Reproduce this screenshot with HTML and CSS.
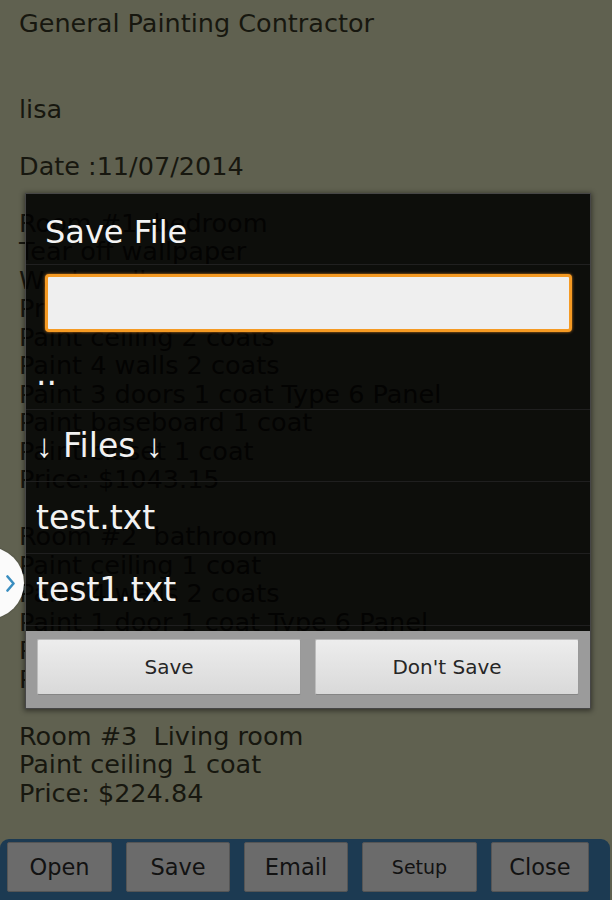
FILE: index.html
```html
<!DOCTYPE html>
<html lang="en">
<head>
  <meta charset="UTF-8" />
  <meta name="viewport" content="width=device-width, initial-scale=1" />
  <title>Estimate - Save File</title>
  <link rel="stylesheet" href="styles.css">
</head>
<body>

<div id="screen">
  <div id="doc">
<p id="docText">General Painting Contractor


lisa

Date :11/07/2014

Room #1  bedroom
Tear off wallpaper
Wash walls
Prime 4 walls 1 coat
Paint ceiling 2 coats
Paint 4 walls 2 coats
Paint 3 doors 1 coat Type 6 Panel
Paint baseboard 1 coat
Paint closet 1 coat
Price: $1043.15

Room #2  bathroom
Paint ceiling 1 coat
Paint 4 walls 2 coats
Paint 1 door 1 coat Type 6 Panel
Paint baseboard 1 coat
Price: $486.20

Room #3  Living room
Paint ceiling 1 coat
Price: $224.84</p>
  </div>

  <div id="toolbar">
    <button class="tool">Open</button>
    <button class="tool">Save</button>
    <button class="tool">Email</button>
    <button class="tool small">Setup</button>
    <button class="tool">Close</button>
  </div>

  <!-- save dialog, sits over the estimate -->
  <div id="dialog">
    <div class="dialog-title">Save File</div>
    <input class="file-name" type="text" value="" />
    <div class="file-list">
      <div class="file-row"><span>..</span></div>
      <div class="file-row"><span><span class="arrow">↓</span> Files <span class="arrow">↓</span></span></div>
      <div class="file-row"><span>test.txt</span></div>
      <div class="file-row"><span>test1.txt</span></div>
    </div>
    <div class="dialog-buttons">
      <button class="dlg-btn">Save</button>
      <button class="dlg-btn">Don't Save</button>
    </div>
  </div>

  <div id="handle">
    <svg width="9" height="17" viewBox="0 0 9 17">
      <polyline points="1.5,1.5 7.5,8.5 1.5,15.5" fill="none" stroke="#3a8ec0" stroke-width="2.6" stroke-linecap="round" stroke-linejoin="round" />
    </svg>
  </div>
</div>

</body>
</html>
```

FILE: styles.css
```css
body {
  margin: 0;
  background-color: #606150;
  font-family: "DejaVu Sans", sans-serif;
}
#screen {
  position: relative;
  width: 612px;
  height: 900px;
  display: flex;
  flex-direction: column;
  overflow: hidden;
  background-color: #606150;
}
#doc {
  flex: 1;
  overflow: hidden;
  padding: 9px 0 0 19px;
}
#docText {
  margin: 0;
  white-space: pre;
  font-size: 25.5px;
  line-height: 28.5px;
  color: #17170f;
}
#toolbar {
  flex: none;
  display: grid;
  grid-template-columns: 105px 104px 104px 115px 98px;
  column-gap: 14px;
  height: 61px;
  box-sizing: border-box;
  padding: 3px 0 8px 7px;
  margin-right: 2px;
  background-color: #1c3a52;
  border-radius: 9px 9px 0 0;
}
.tool {
  height: 50px;
  margin: 0;
  padding: 0;
  background-color: #6b6b6b;
  border: 1px solid #555555;
  border-radius: 2px;
  font-family: "DejaVu Sans", sans-serif;
  font-size: 22.5px;
  color: #121212;
}
.tool.small {
  font-size: 19px;
}
#dialog {
  position: absolute;
  top: 193px;
  left: 25px;
  width: 566px;
  height: 516px;
  box-sizing: border-box;
  display: flex;
  flex-direction: column;
  background-color: rgba(0, 0, 0, 0.86);
  border: 1px solid #464646;
  box-shadow: 0 1px 5px 1px rgba(0, 0, 0, 0.45);
}
.dialog-title {
  flex: none;
  height: 71px;
  box-sizing: border-box;
  display: flex;
  align-items: center;
  padding: 6px 0 0 19px;
  border-bottom: 1px solid #202020;
  font-size: 32px;
  color: #f4f4f4;
}
.file-name {
  flex: none;
  height: 58px;
  box-sizing: border-box;
  margin: 9px 18px 0 19px;
  background-color: #efefef;
  border: 3px solid #f59a23;
  border-radius: 4px;
  box-shadow: 0 0 3px rgba(247, 150, 40, 0.8);
  outline: none;
}
.file-list {
  flex: 1;
  margin-top: 6px;
  overflow: hidden;
}
.file-row {
  height: 72px;
  box-sizing: border-box;
  display: flex;
  align-items: center;
  padding-left: 10px;
  border-bottom: 1px solid #1f1f1f;
  font-size: 33px;
  color: #f2f2f2;
  white-space: pre;
}
.arrow {
  font-family: "Liberation Sans", sans-serif;
}
.dialog-buttons {
  flex: none;
  display: flex;
  gap: 14px;
  padding: 8px 11px 13px;
  background-color: #9b9b9b;
}
.dlg-btn {
  flex: 1;
  height: 56px;
  margin: 0;
  background: linear-gradient(#ededed, #d9d9d9);
  border: 1px solid #bcbcbc;
  border-right-color: #999999;
  border-bottom-color: #858585;
  border-radius: 2px;
  font-family: "DejaVu Sans", sans-serif;
  font-size: 20px;
  color: #262626;
}
#handle {
  position: absolute;
  left: -48px;
  top: 547px;
  width: 72px;
  height: 72px;
  box-sizing: border-box;
  display: flex;
  align-items: center;
  justify-content: flex-end;
  padding-right: 9px;
  border-radius: 50%;
  background-color: #fbfbfb;
  box-shadow: 0 0 2px rgba(0, 0, 0, 0.3);
}
```
